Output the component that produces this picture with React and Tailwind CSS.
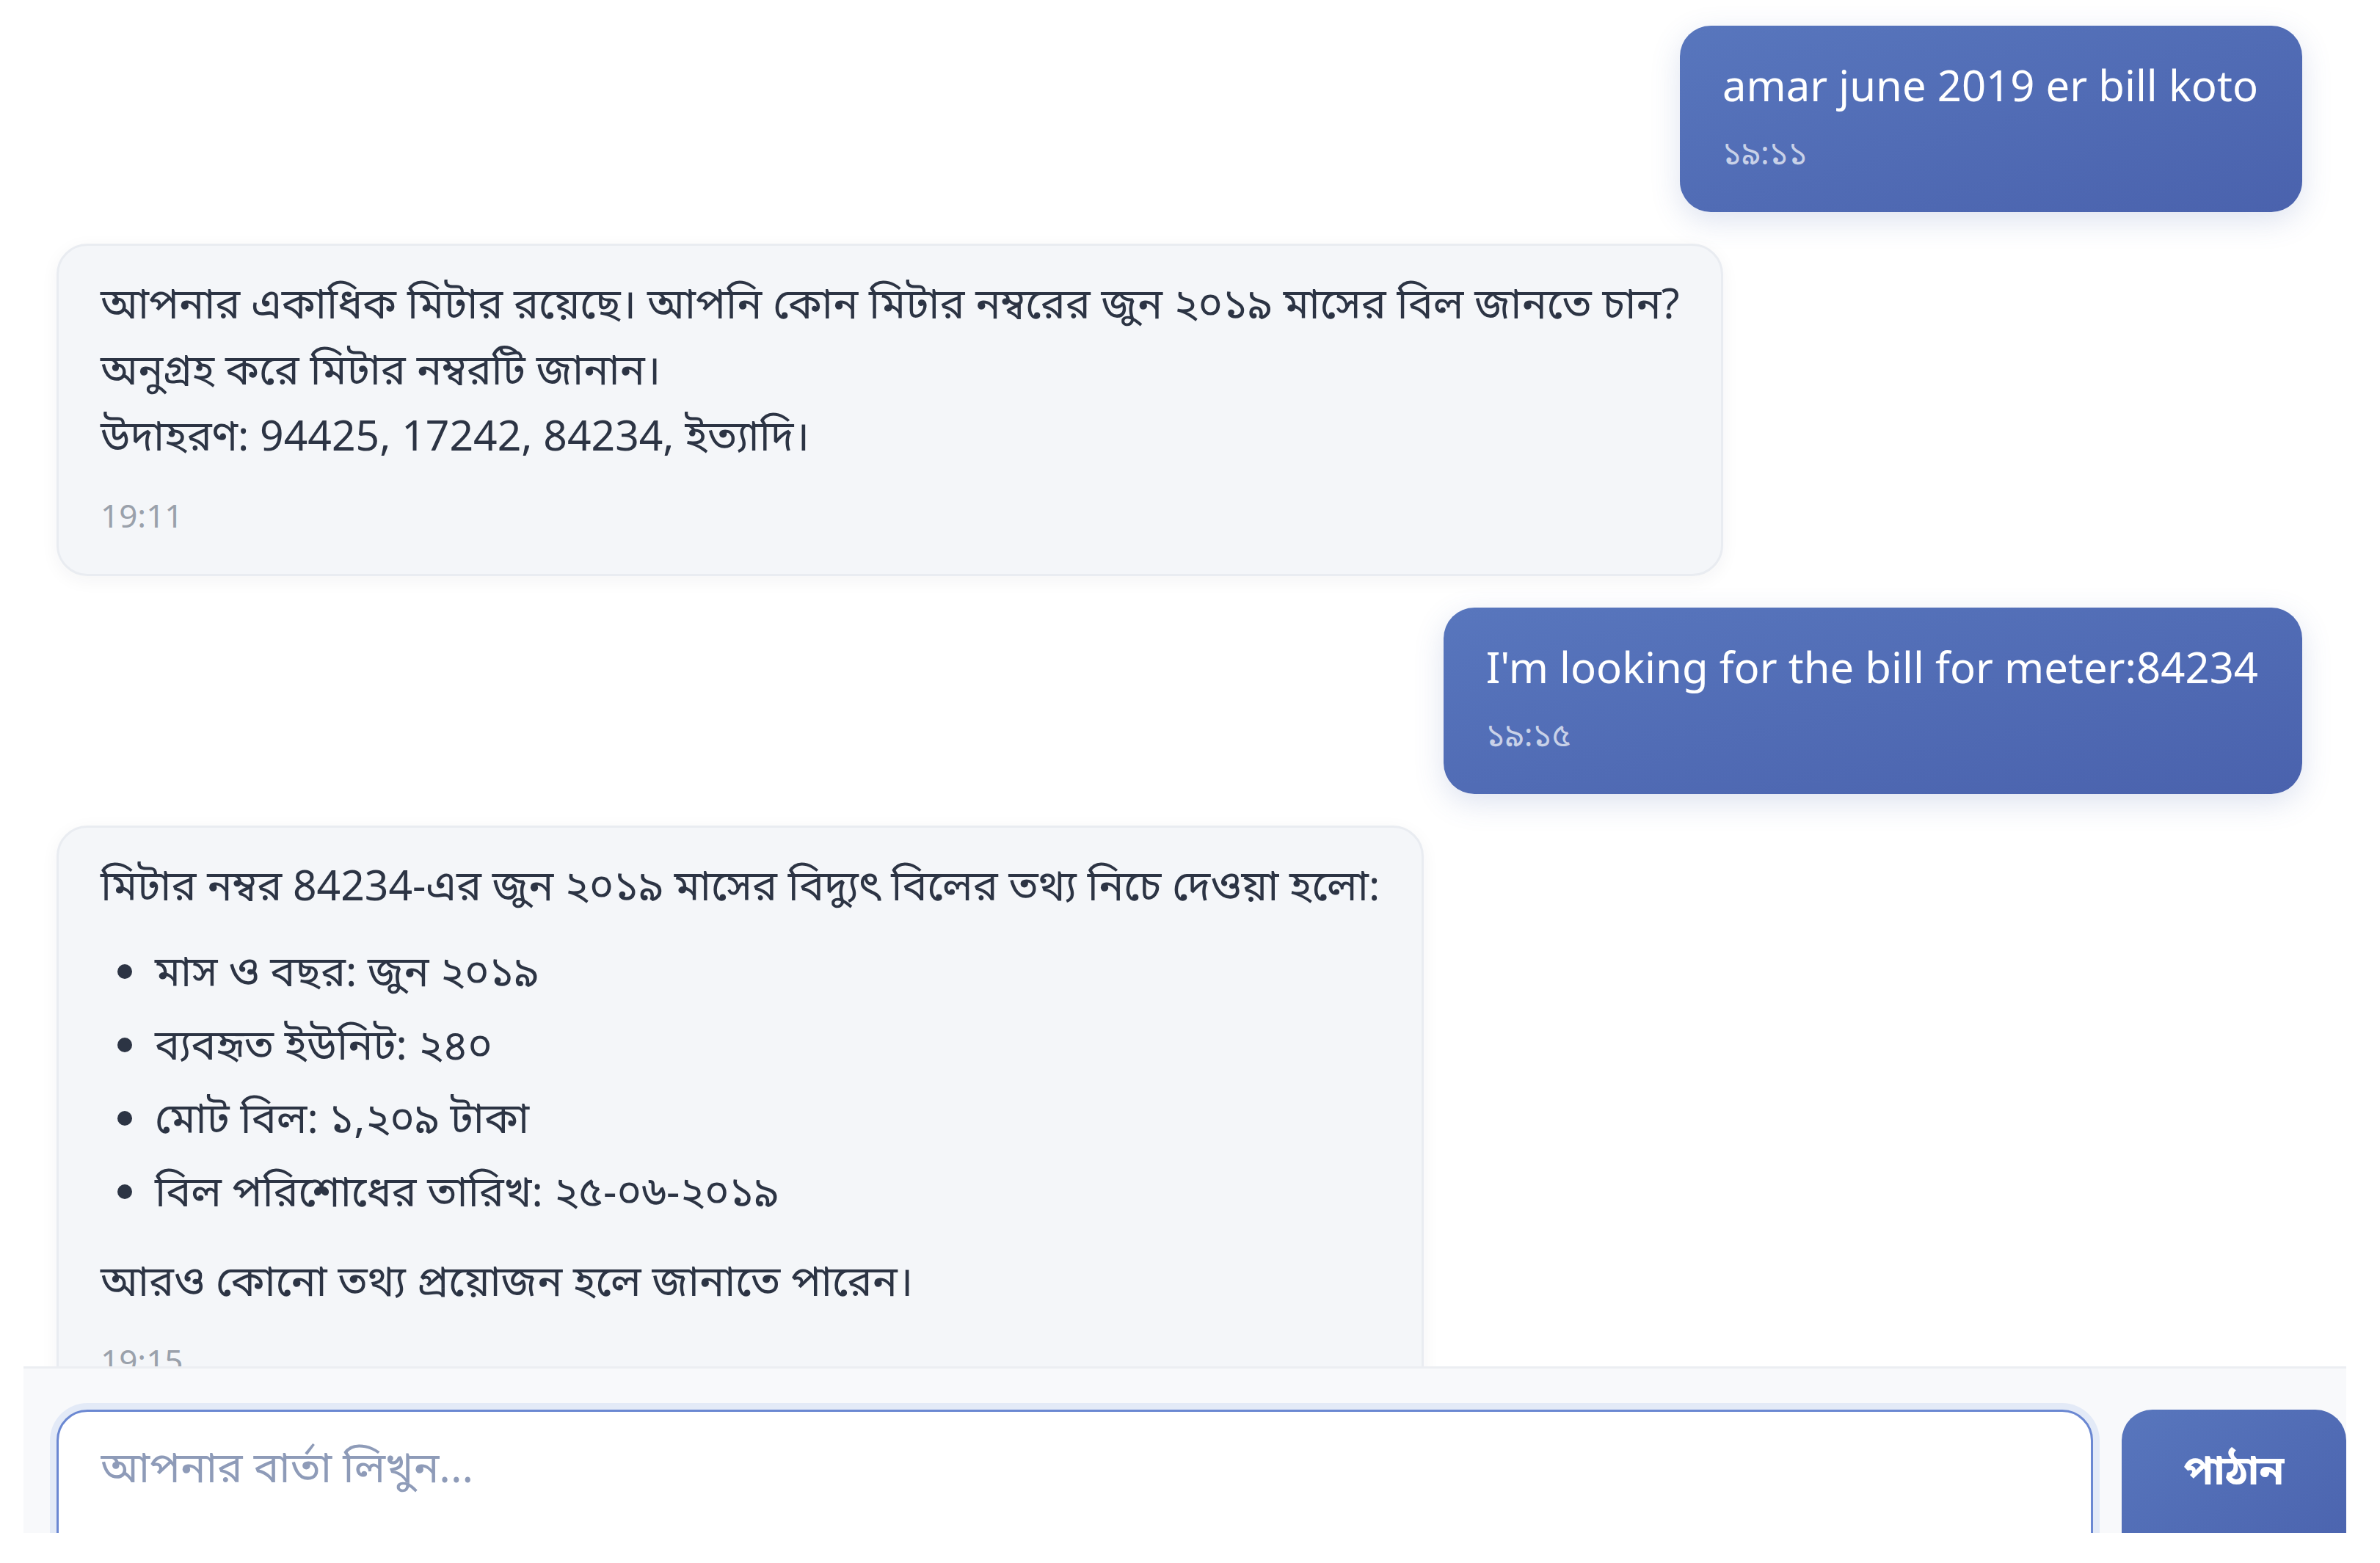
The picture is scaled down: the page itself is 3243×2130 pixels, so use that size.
import React, { useState } from 'react';

const userFont = { fontFamily: '"Noto Sans", "Noto Sans Bengali", "Lohit Bengali", "FreeSans", sans-serif' };

const messages = [
    { id: 1, role: 'user', text: 'amar june 2019 er bill koto', time: '১৯:১১' },
    {
        id: 2,
        role: 'bot',
        lines: [
            'আপনার একাধিক মিটার রয়েছে। আপনি কোন মিটার নম্বরের জুন ২০১৯ মাসের বিল জানতে চান?',
            'অনুগ্রহ করে মিটার নম্বরটি জানান।',
            'উদাহরণ: 94425, 17242, 84234, ইত্যাদি।',
        ],
        time: '19:11',
    },
    { id: 3, role: 'user', text: "I'm looking for the bill for meter:84234", time: '১৯:১৫' },
    {
        id: 4,
        role: 'bot',
        intro: 'মিটার নম্বর 84234-এর জুন ২০১৯ মাসের বিদ্যুৎ বিলের তথ্য নিচে দেওয়া হলো:',
        items: [
            'মাস ও বছর: জুন ২০১৯',
            'ব্যবহৃত ইউনিট: ২৪০',
            'মোট বিল: ১,২০৯ টাকা',
            'বিল পরিশোধের তারিখ: ২৫-০৬-২০১৯',
        ],
        outro: 'আরও কোনো তথ্য প্রয়োজন হলে জানাতে পারেন।',
        time: '19:15',
    },
];

const UserBubble = ({ msg }) => (
    <div className="flex justify-end">
        <div className="rounded-[42px] bg-gradient-to-br from-[#5876bd] to-[#4a62ad] pl-[58px] pr-[60px] pt-[45px] pb-[55px] text-white shadow-[0_12px_40px_rgba(74,98,173,0.18)]">
            <div className="text-[58px] leading-[72px] whitespace-nowrap">{msg.text}</div>
            <div className="mt-[28px] text-[44px] leading-[54px] text-white/70">{msg.time}</div>
        </div>
    </div>
);

const BotBubble = ({ msg }) => (
    <div className="flex justify-start">
        <div className="max-w-[75%] rounded-[42px] border-[3px] border-[#e9ecf1] bg-[#f4f6f9] px-[57px] pt-[32px] pb-[53px] text-[#2c3444] shadow-[0_6px_24px_rgba(30,40,60,0.05)]">
            {msg.lines && (
                <div className="text-[57px] leading-[90px]">
                    {msg.lines.map((line, i) => (
                        <div key={i} className="whitespace-nowrap">{line}</div>
                    ))}
                </div>
            )}
            {msg.intro && (
                <div className="text-[57px] leading-[90px]">
                    <p className="whitespace-nowrap">{msg.intro}</p>
                    <ul className="mt-[27px] mb-[32px] pl-[70px] list-disc">
                        {msg.items.map((item, i) => (
                            <li key={i} className="mb-[10px] pl-[4px]">{item}</li>
                        ))}
                    </ul>
                    <p>{msg.outro}</p>
                </div>
            )}
            <div className="mt-[38px] text-[44px] leading-[54px] text-[#9aa1ab]">{msg.time}</div>
        </div>
    </div>
);

const App = () => {
    const [draft, setDraft] = useState('');

    return (
        <div className="w-full h-[2130px] bg-white" style={userFont}>
            <div className="ml-[32px] w-[3165px] h-[2089px] flex flex-col overflow-hidden bg-white">
                <div className="flex-1 overflow-hidden pl-[45px] pr-[60px] pt-[35px] flex flex-col gap-[43px]">
                    {messages.map((msg) =>
                        msg.role === 'user' ? <UserBubble key={msg.id} msg={msg} /> : <BotBubble key={msg.id} msg={msg} />
                    )}
                </div>
                <div className="shrink-0 h-[227px] border-t-[3px] border-[#eceef2] bg-[#f8f9fb] pl-[45px] pt-[56px] flex gap-[39px]">
                    <div className="flex-1 h-[230px] rounded-[42px] border-[3px] border-[#6b88d2] bg-white ring-[9px] ring-[#e3eaf7] px-[57px] pt-[38px]">
                        <input
                            value={draft}
                            onChange={(e) => setDraft(e.target.value)}
                            placeholder="আপনার বার্তা লিখুন..."
                            className="w-full bg-transparent text-[58px] leading-[72px] text-[#2c3444] placeholder:text-[#8e9bb8] outline-none"
                            autoFocus
                        />
                    </div>
                    <button className="w-[306px] h-[230px] rounded-[42px] bg-gradient-to-br from-[#5876bd] to-[#4a62ad] text-white text-[55px] font-bold pb-[68px]">
                        পাঠান
                    </button>
                </div>
            </div>
        </div>
    );
};

export default App;
